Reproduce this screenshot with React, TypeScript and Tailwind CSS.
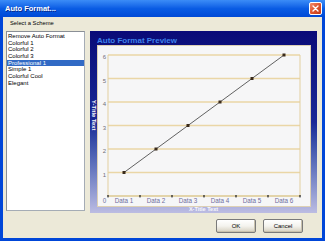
import React from 'react';

const SCHEMES = [
  'Remove Auto Format',
  'Colorful 1',
  'Colorful 2',
  'Colorful 3',
  'Professional 1',
  'Simple 1',
  'Colorful Cool',
  'Elegant',
];

const SELECTED = 4;

// plot geometry inside the white chart area (214 x 162)
const PLOT = { left: 11, right: 203, top: 10, bottom: 151 };
const rowH = (PLOT.bottom - PLOT.top) / 6;
const yOf = (v: number) => PLOT.bottom - v * rowH;
const xOf = (i: number) => PLOT.left + 16 + i * 32;

function PreviewChart() {
  const pts = [1, 2, 3, 4, 5, 6].map((v, i) => [xOf(i), yOf(v)]);
  return (
    <svg width="214" height="162" viewBox="0 0 214 162" className="block">
      <rect x="0.5" y="0.5" width="213" height="161" fill="#f6f6f7" stroke="#ddd0b4" />
      {[1, 2, 3, 4, 5, 6].map((v) => (
        <line key={v} x1={PLOT.left} x2={PLOT.right} y1={yOf(v)} y2={yOf(v)} stroke="#ead6a6" strokeWidth="1.3" />
      ))}
      <line x1={PLOT.left} x2={PLOT.left} y1={PLOT.top} y2={PLOT.bottom} stroke="#e2cf9f" />
      <line x1={PLOT.right} x2={PLOT.right} y1={PLOT.top} y2={PLOT.bottom} stroke="#e2cf9f" />
      <line x1={PLOT.left} x2={PLOT.right} y1={PLOT.bottom} y2={PLOT.bottom} stroke="#dcc890" strokeWidth="1.3" />
      {[0, 1, 2, 3, 4, 5, 6].map((i) => (
        <rect key={i} x={PLOT.left + i * 32 - 0.7} y={PLOT.bottom - 1} width="1.4" height="2.4" fill="#333" />
      ))}
      <polyline points={pts.map((p) => p.join(',')).join(' ')} fill="none" stroke="#505050" strokeWidth="0.9" />
      {pts.map(([x, y], i) => (
        <rect key={i} x={x - 1.5} y={y - 1.5} width="3" height="3" fill="#3a2a1a" />
      ))}
      <g fontFamily="Liberation Sans, Arial, sans-serif" fontSize="6" fill="#707078" textAnchor="middle">
        {[1, 2, 3, 4, 5, 6].map((v) => (
          <text key={v} x="7.5" y={yOf(v) + 4}>
            {v}
          </text>
        ))}
      </g>
      <g fontFamily="Liberation Sans, Arial, sans-serif" fontSize="6.3" fill="#6e6e9e" textAnchor="middle">
        <text x="7.5" y="158">0</text>
        {[0, 1, 2, 3, 4, 5].map((i) => (
          <text key={i} x={xOf(i)} y="158">
            Data {i + 1}
          </text>
        ))}
      </g>
    </svg>
  );
}

function XpButton({ label }: { label: string }) {
  return (
    <button className="w-[40px] h-[14px] rounded-[2px] border border-[#7a7a7a] bg-gradient-to-b from-[#ffffff] via-[#f4f3ee] to-[#d6d0c0] shadow-[inset_-1px_-1px_0_#c9c2ad] text-[6px] leading-none text-black">
      {label}
    </button>
  );
}

export default function App() {
  return (
    <div
      className="w-[325px] h-[241px] flex flex-col overflow-hidden bg-[#0046d8] select-none"
      style={{ fontFamily: '"Liberation Sans", Arial, sans-serif' }}
    >
      {/* title bar */}
      <div className="h-[17px] shrink-0 flex items-center justify-between pl-[5px] pr-[3px] bg-gradient-to-b from-[#3b8cf7] via-[#0a5ce4] to-[#0049d6]">
        <span className="text-white text-[7.5px] font-bold leading-none [text-shadow:1px_1px_0_#0a2a8a]">Auto Format...</span>
        <div className="w-[13px] h-[13px] rounded-[2px] border border-white bg-gradient-to-br from-[#f08a6a] via-[#e0542e] to-[#c03a1a] flex items-center justify-center">
          <svg width="7" height="7" viewBox="0 0 7 7">
            <path d="M1 1 L6 6 M6 1 L1 6" stroke="white" strokeWidth="1.4" strokeLinecap="round" />
          </svg>
        </div>
      </div>

      {/* body */}
      <div className="flex-1 mx-[3px] mb-[3px] bg-[#ece9d8] flex flex-col pl-[3px] pr-[5px]">
        <div className="h-[14px] flex items-center pl-[4px] text-[5.8px] leading-none text-black">Select a Scheme</div>

        <div className="flex gap-[5px] h-[182px] items-start">
          {/* scheme list */}
          <div className="w-[79px] h-[180px] bg-white border border-[#a5acb5] border-t-[#8a8f96] border-l-[#8a8f96] pt-[1px]">
            {SCHEMES.map((s, i) => (
              <div
                key={s}
                className={`h-[6.7px] pl-[1px] text-[6px] leading-[6.7px] whitespace-nowrap ${
                  i === SELECTED ? 'bg-[#316ac5] text-white' : 'text-black'
                }`}
              >
                {s}
              </div>
            ))}
          </div>

          {/* preview panel */}
          <div className="w-[227px] h-[182px] flex flex-col overflow-hidden bg-gradient-to-b from-[#0a0a78] via-[#1a2896] to-[#bcbce2]">
            <div className="h-[14px] pl-[7px] flex items-end text-[8px] font-bold leading-none text-[#3f82ea]">
              Auto Format Preview
            </div>
            <div className="flex">
              <div className="w-[7px] flex justify-center pt-[55px]">
                <span className="[writing-mode:vertical-rl] text-[5.8px] font-bold leading-none text-white whitespace-nowrap">
                  Y-Title Text
                </span>
              </div>
              <PreviewChart />
            </div>
            <div className="h-[6px] flex justify-center items-center">
              <span className="text-[5.5px] font-bold leading-none text-white/90 whitespace-nowrap">X-Title Text</span>
            </div>
          </div>
        </div>

        <div className="flex justify-end gap-[7px] pr-[14px] mt-[6px]">
          <XpButton label="OK" />
          <XpButton label="Cancel" />
        </div>
      </div>
    </div>
  );
}
